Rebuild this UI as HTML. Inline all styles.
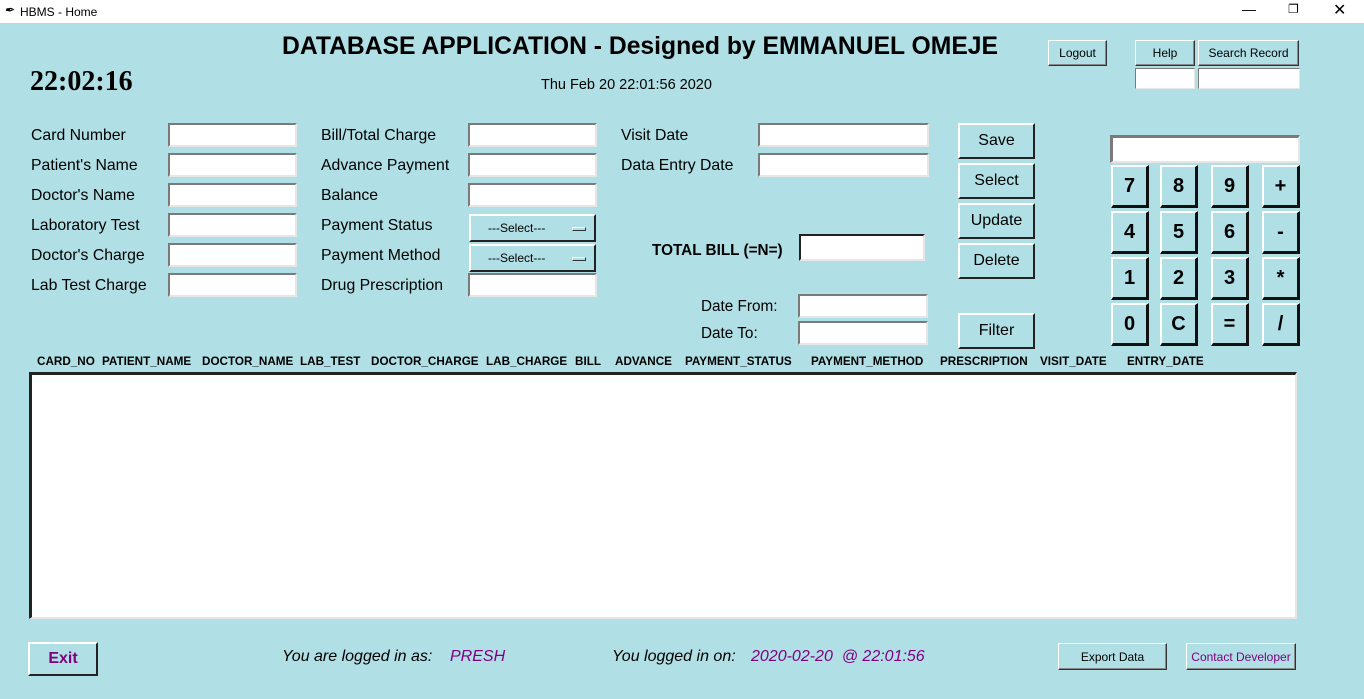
<!DOCTYPE html>
<html><head><meta charset="utf-8"><style>
*{margin:0;padding:0;box-sizing:border-box}
body{width:1364px;height:699px;background:#b0dfe5;font-family:"Liberation Sans",Arial,sans-serif;position:relative;overflow:hidden;color:#000}
.a{position:absolute;white-space:nowrap}
.tb{position:absolute;left:0;top:0;width:1364px;height:23px;background:#fff;font-size:12px}
.lbl{font-size:15.8px}
.e{position:absolute;background:#fff;border:2px solid;border-color:#7a7a7a #e6e6e6 #e6e6e6 #7a7a7a}
.b{position:absolute;background:#b0dfe5;border:2px solid;border-color:#fff #222 #222 #fff;display:flex;align-items:center;justify-content:center;font-size:16px}
.s{font-size:12px;border-width:1px;border-color:#fff #333 #333 #fff;box-shadow:inset -1px -1px 0 #888}
.k{font-size:20px;font-weight:bold;border-color:#fff #111 #111 #fff;border-width:2px 3px 3px 2px}
.h{font-size:11.7px;font-weight:bold;top:355px}
</style></head><body>
<div class="tb"><span class="a" style="left:4px;top:3px;font-style:italic">&#10002;</span><span class="a" style="left:20px;top:5px">HBMS - Home</span>
<span class="a" style="left:1242px;top:1px;font-size:14px">&#8212;</span><span class="a" style="left:1288px;top:2px;font-size:12px">&#10064;</span><span class="a" style="left:1333px;top:0px;font-size:16px">&#10005;</span></div>
<div class="a" style="left:282px;top:33px;font-size:24.7px;font-weight:bold">DATABASE APPLICATION - Designed by EMMANUEL OMEJE</div>
<div class="a" style="left:30px;top:66px;font-size:28px;font-weight:bold;font-family:'Liberation Serif',serif">22:02:16</div>
<div class="a" style="left:541px;top:77px;font-size:14.5px">Thu Feb 20 22:01:56 2020</div>
<div class="b s" style="left:1048px;top:40px;width:59px;height:26px">Logout</div>
<div class="b s" style="left:1135px;top:40px;width:60px;height:26px">Help</div>
<div class="b s" style="left:1198px;top:40px;width:101px;height:26px">Search Record</div>
<div class="e" style="left:1135px;top:68px;width:60px;height:21px;border-width:1px"></div>
<div class="e" style="left:1198px;top:68px;width:102px;height:21px;border-width:1px"></div>

<div class="a lbl" style="left:31px;top:127px">Card Number</div>
<div class="a lbl" style="left:31px;top:157px">Patient's Name</div>
<div class="a lbl" style="left:31px;top:187px">Doctor's Name</div>
<div class="a lbl" style="left:31px;top:217px">Laboratory Test</div>
<div class="a lbl" style="left:31px;top:247px">Doctor's Charge</div>
<div class="a lbl" style="left:31px;top:277px">Lab Test Charge</div>
<div class="e" style="left:168px;top:123px;width:129px;height:24px"></div>
<div class="e" style="left:168px;top:153px;width:129px;height:24px"></div>
<div class="e" style="left:168px;top:183px;width:129px;height:24px"></div>
<div class="e" style="left:168px;top:213px;width:129px;height:24px"></div>
<div class="e" style="left:168px;top:243px;width:129px;height:24px"></div>
<div class="e" style="left:168px;top:273px;width:129px;height:24px"></div>

<div class="a lbl" style="left:321px;top:127px">Bill/Total Charge</div>
<div class="a lbl" style="left:321px;top:157px">Advance Payment</div>
<div class="a lbl" style="left:321px;top:187px">Balance</div>
<div class="a lbl" style="left:321px;top:217px">Payment Status</div>
<div class="a lbl" style="left:321px;top:247px">Payment Method</div>
<div class="a lbl" style="left:321px;top:277px">Drug Prescription</div>
<div class="e" style="left:468px;top:123px;width:129px;height:24px"></div>
<div class="e" style="left:468px;top:153px;width:129px;height:24px"></div>
<div class="e" style="left:468px;top:183px;width:129px;height:24px"></div>
<div class="b" style="left:469px;top:214px;width:127px;height:28px;font-size:12px;justify-content:flex-start;padding-left:17px">---Select---<span class="a" style="left:101px;top:11px;width:14px;height:4px;border:1px solid;border-color:#fff #333 #333 #fff"></span></div>
<div class="b" style="left:469px;top:244px;width:127px;height:28px;font-size:12px;justify-content:flex-start;padding-left:17px">---Select---<span class="a" style="left:101px;top:11px;width:14px;height:4px;border:1px solid;border-color:#fff #333 #333 #fff"></span></div>
<div class="e" style="left:468px;top:273px;width:129px;height:24px"></div>

<div class="a lbl" style="left:621px;top:127px">Visit Date</div>
<div class="a lbl" style="left:621px;top:157px">Data Entry Date</div>
<div class="e" style="left:758px;top:123px;width:171px;height:24px"></div>
<div class="e" style="left:758px;top:153px;width:171px;height:24px"></div>
<div class="a" style="left:652px;top:242px;font-size:15.3px;font-weight:bold">TOTAL BILL (=N=)</div>
<div class="e" style="left:799px;top:234px;width:126px;height:27px;border-color:#222 #e6e6e6 #e6e6e6 #222"></div>
<div class="a" style="left:701px;top:298px;font-size:15.3px">Date From:</div>
<div class="a" style="left:701px;top:325px;font-size:15.3px">Date To:</div>
<div class="e" style="left:798px;top:294px;width:130px;height:24px"></div>
<div class="e" style="left:798px;top:321px;width:130px;height:24px"></div>

<div class="b" style="left:958px;top:123px;width:77px;height:36px">Save</div>
<div class="b" style="left:958px;top:163px;width:77px;height:36px">Select</div>
<div class="b" style="left:958px;top:203px;width:77px;height:36px">Update</div>
<div class="b" style="left:958px;top:243px;width:77px;height:36px">Delete</div>
<div class="b" style="left:958px;top:313px;width:77px;height:36px">Filter</div>

<div class="e" style="left:1110px;top:135px;width:190px;height:28px;border-width:3px 2px 2px 3px"></div>
<div class="b k" style="left:1111px;top:165px;width:38px;height:43px">7</div>
<div class="b k" style="left:1160px;top:165px;width:38px;height:43px">8</div>
<div class="b k" style="left:1211px;top:165px;width:38px;height:43px">9</div>
<div class="b k" style="left:1262px;top:165px;width:38px;height:43px">+</div>
<div class="b k" style="left:1111px;top:211px;width:38px;height:43px">4</div>
<div class="b k" style="left:1160px;top:211px;width:38px;height:43px">5</div>
<div class="b k" style="left:1211px;top:211px;width:38px;height:43px">6</div>
<div class="b k" style="left:1262px;top:211px;width:38px;height:43px">-</div>
<div class="b k" style="left:1111px;top:257px;width:38px;height:43px">1</div>
<div class="b k" style="left:1160px;top:257px;width:38px;height:43px">2</div>
<div class="b k" style="left:1211px;top:257px;width:38px;height:43px">3</div>
<div class="b k" style="left:1262px;top:257px;width:38px;height:43px">*</div>
<div class="b k" style="left:1111px;top:303px;width:38px;height:43px">0</div>
<div class="b k" style="left:1160px;top:303px;width:38px;height:43px">C</div>
<div class="b k" style="left:1211px;top:303px;width:38px;height:43px">=</div>
<div class="b k" style="left:1262px;top:303px;width:38px;height:43px">/</div>

<div class="a h" style="left:37px">CARD_NO</div>
<div class="a h" style="left:102px">PATIENT_NAME</div>
<div class="a h" style="left:202px">DOCTOR_NAME</div>
<div class="a h" style="left:300px">LAB_TEST</div>
<div class="a h" style="left:371px">DOCTOR_CHARGE</div>
<div class="a h" style="left:486px">LAB_CHARGE</div>
<div class="a h" style="left:575px">BILL</div>
<div class="a h" style="left:615px">ADVANCE</div>
<div class="a h" style="left:685px">PAYMENT_STATUS</div>
<div class="a h" style="left:811px">PAYMENT_METHOD</div>
<div class="a h" style="left:940px">PRESCRIPTION</div>
<div class="a h" style="left:1040px">VISIT_DATE</div>
<div class="a h" style="left:1127px">ENTRY_DATE</div>
<div class="e" style="left:29px;top:372px;width:1268px;height:247px;border-width:3px 2px 2px 3px;border-color:#222 #e6e6e6 #e6e6e6 #222"></div>

<div class="b" style="left:28px;top:642px;width:70px;height:34px;color:#800080;font-weight:bold">Exit</div>
<div class="a" style="left:282px;top:648px;font-size:16px;font-style:italic">You are logged in as:</div>
<div class="a" style="left:450px;top:648px;font-size:16px;font-style:italic;color:#800080">PRESH</div>
<div class="a" style="left:612px;top:648px;font-size:16px;font-style:italic">You logged in on:</div>
<div class="a" style="left:751px;top:648px;font-size:16px;font-style:italic;color:#800080">2020-02-20 &nbsp;@ 22:01:56</div>
<div class="b s" style="left:1058px;top:643px;width:109px;height:27px">Export Data</div>
<div class="b s" style="left:1186px;top:643px;width:110px;height:27px;color:#800080">Contact Developer</div>
</body></html>
